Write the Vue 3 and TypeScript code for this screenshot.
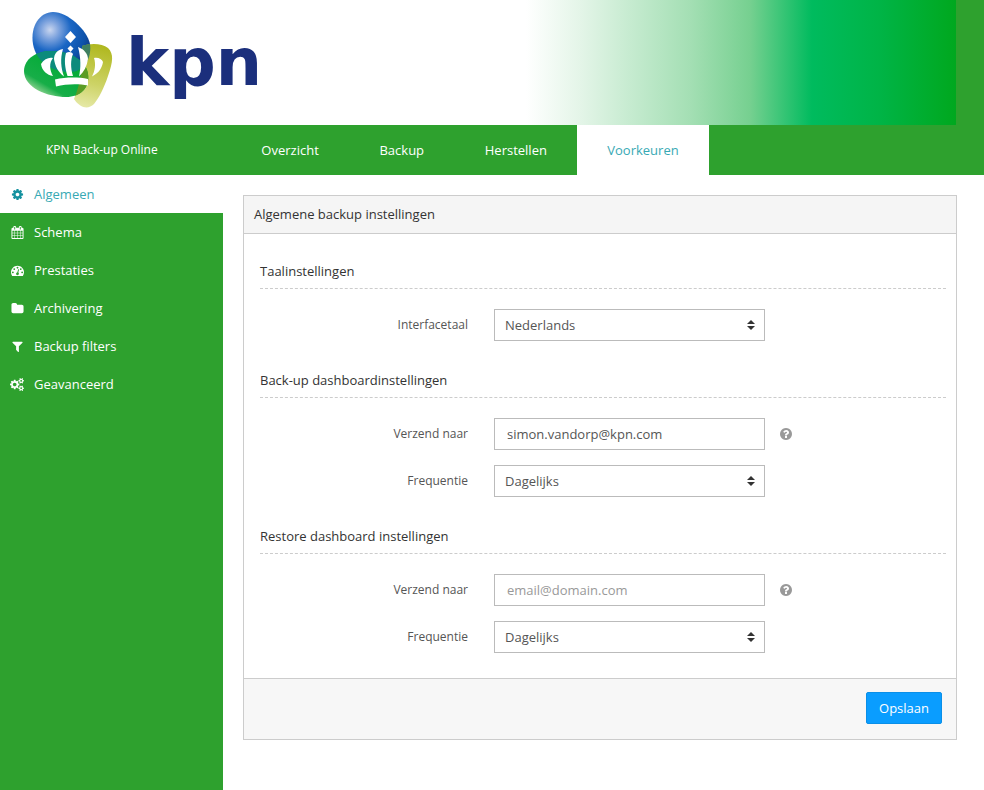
<template>
  <div class="app">
    <header class="top">
      <svg class="logo" viewBox="0 0 270 125" width="270" height="125" role="img" aria-label="kpn">
        <defs>
          <radialGradient id="blueEgg" gradientUnits="userSpaceOnUse" cx="50" cy="30" r="44">
            <stop offset="0" stop-color="#c9d6ef" />
            <stop offset="0.2" stop-color="#7fa4de" />
            <stop offset="0.48" stop-color="#1a66c4" />
            <stop offset="0.8" stop-color="#0d52ab" />
            <stop offset="1" stop-color="#103a86" />
          </radialGradient>
          <linearGradient id="greenBlob" gradientUnits="userSpaceOnUse" x1="58" y1="62" x2="38" y2="96">
            <stop offset="0" stop-color="#04ab38" />
            <stop offset="0.65" stop-color="#17ae48" />
            <stop offset="1" stop-color="#b5dea9" />
          </linearGradient>
          <linearGradient id="yellowBlob" gradientUnits="userSpaceOnUse" x1="100" y1="46" x2="84" y2="108">
            <stop offset="0" stop-color="#b0b820" />
            <stop offset="0.6" stop-color="#cdd366" />
            <stop offset="1" stop-color="#e6e9a8" />
          </linearGradient>
          <clipPath id="inGreen">
            <path :d="greenShape" />
          </clipPath>
          <clipPath id="inBlue">
            <path :d="blueShape" />
          </clipPath>
        </defs>

        <path :d="blueShape" fill="url(#blueEgg)" />
        <path :d="yellowShape" fill="url(#yellowBlob)" />
        <path :d="yellowShape" fill="#3f7f60" clip-path="url(#inBlue)" />
        <path :d="greenShape" fill="url(#greenBlob)" />
        <path :d="blueShape" fill="#0c8b7c" clip-path="url(#inGreen)" />
        <path :d="yellowShape" fill="#5b9c24" clip-path="url(#inGreen)" />

        <g fill="#fff">
          <path d="M70.500 31L76 37L70.500 43L65 37Z" />
          <path d="M70.500 45.500L73.500 48.500L70.500 52L67.500 48.500Z" />
          <path d="M55 79.500C66 77 78 77 88 79L88 85.500C78 83.500 66 84 56 86.500Z" />
          <path d="M41 64C44 59 49 57 53 58C49 63 49.500 70 53 76C47 75 42 71 41 64Z" />
          <path d="M63 49C57 50 54 54 54 59C55 66 58 72 64 76.500C61 68 60 59 63 49Z" />
          <path d="M66 53C69 51 72 52 73 54C70.500 60 70.500 68 73 76L67.500 76C65 68 64 60 66 53Z" />
          <path d="M78 47C84 49 88 54 88 59C87 66 84 72 79 76.500C81 68 81 58 78 47Z" />
          <path d="M94 58C98 57 102 59 103 62C102 68 99 73 92 76.500C95 71 96 64 94 58Z" />
        </g>
        <text class="wordmark" x="126" y="85">kpn</text>
      </svg>
    </header>

    <nav class="nav">
      <span class="brand">KPN Back-up Online</span>
      <a
        v-for="tab in tabs"
        :key="tab"
        class="tab"
        :class="{ active: tab === activeTab }"
      >{{ tab }}</a>
    </nav>

    <div class="main">
      <aside class="side">
        <a
          v-for="item in menu"
          :key="item.label"
          class="side-item"
          :class="{ active: item.label === 'Algemeen' }"
        >
          <span class="side-icon">
            <svg :viewBox="item.box" :width="item.width" height="13" fill="currentColor" aria-hidden="true">
              <path :d="item.path" />
            </svg>
          </span>
          {{ item.label }}
        </a>
      </aside>

      <section class="content">
        <div class="panel">
          <div class="panel-head">Algemene backup instellingen</div>

          <div class="panel-body">
            <div class="group">
              <h3 class="group-title">Taalinstellingen</h3>
              <div class="row">
                <label class="row-label">Interfacetaal</label>
                <div class="select-wrap">
                  <select class="ctrl select">
                    <option>Nederlands</option>
                  </select>
                  <span class="carets"></span>
                </div>
              </div>
            </div>

            <div class="group">
              <h3 class="group-title">Back-up dashboardinstellingen</h3>
              <div class="row">
                <label class="row-label">Verzend naar</label>
                <input class="ctrl input" type="text" value="simon.vandorp@kpn.com" />
                <svg class="help" viewBox="0 0 1792 1792" width="14" height="14" fill="currentColor" aria-hidden="true">
                  <path :d="helpPath" />
                </svg>
              </div>
              <div class="row">
                <label class="row-label">Frequentie</label>
                <div class="select-wrap">
                  <select class="ctrl select">
                    <option>Dagelijks</option>
                  </select>
                  <span class="carets"></span>
                </div>
              </div>
            </div>

            <div class="group">
              <h3 class="group-title">Restore dashboard instellingen</h3>
              <div class="row">
                <label class="row-label">Verzend naar</label>
                <input class="ctrl input" type="text" placeholder="email@domain.com" />
                <svg class="help" viewBox="0 0 1792 1792" width="14" height="14" fill="currentColor" aria-hidden="true">
                  <path :d="helpPath" />
                </svg>
              </div>
              <div class="row">
                <label class="row-label">Frequentie</label>
                <div class="select-wrap">
                  <select class="ctrl select">
                    <option>Dagelijks</option>
                  </select>
                  <span class="carets"></span>
                </div>
              </div>
            </div>
          </div>

          <div class="panel-foot">
            <button class="save" type="button">Opslaan</button>
          </div>
        </div>
      </section>
    </div>
  </div>
</template>

<script setup lang="ts">
const tabs = ['Overzicht', 'Backup', 'Herstellen', 'Voorkeuren']
const activeTab = 'Voorkeuren'

// logo blobs, shared with the clip paths for the overlaps
const blueShape = 'M33 44C30 26 40 12 53 12C68 12 87 30 90 44C92 58 84 72 70 72C52 72 36 62 33 44Z'
const greenShape = 'M24 71C24 58 38 50 54 51C70 52 86 60 88 74C90 88 80 97 66 97C48 97 24 88 24 71Z'
const yellowShape = 'M82 46C90 43 102 43 108 48C114 54 113 62 108 76C104 88 99 98 94 104C88 110 80 108 74 99C78 90 84 70 82 46Z'

// font-awesome 4 glyphs
const helpPath =
  'M1024 1376v-192q0-14-9-23t-23-9h-192q-14 0-23 9t-9 23v192q0 14 9 23t23 9h192q14 0 23-9t9-23zm256-672q0-88-55.500-163t-138.500-116-170-41q-243 0-371 213-15 24 8 42l132 100q7 6 19 6 16 0 25-12 53-68 86-92 34-24 86-24 48 0 85.500 26t37.500 59q0 38-20 61t-68 45q-63 28-115.500 86.500t-52.500 125.500v36q0 14 9 23t23 9h192q14 0 23-9t9-23q0-19 21.500-49.500t54.500-49.500q32-18 49-28.500t46-35 44.500-48 28-60.500 12.500-81zm384 192q0 209-103 385.500t-279.500 279.500-385.500 103-385.500-103-279.500-279.500-103-385.500 103-385.500 279.500-279.500 385.500-103 385.500 103 279.500 279.500 103 385.500z'

const menu = [
  {
    label: 'Algemeen',
    box: '0 0 1792 1792',
    width: 13,
    path: 'M1152 896q0-106-75-181t-181-75-181 75-75 181 75 181 181 75 181-75 75-181zm512-109v222q0 12-8 23t-20 13l-185 28q-19 54-39 91 35 50 107 138 10 12 10 25t-9 23q-27 37-99 108t-94 71q-12 0-26-9l-138-108q-44 23-91 38-16 136-29 186-7 28-36 28h-222q-14 0-24.500-8.500t-11.500-21.500l-28-184q-49-16-90-37l-141 107q-10 9-25 9-14 0-25-11-126-114-165-168-7-10-7-23 0-12 8-23 15-21 51-66.500t54-70.500q-27-50-41-99l-183-27q-13-2-21-12.500t-8-23.500v-222q0-12 8-23t19-13l186-28q14-46 39-92-40-57-107-138-10-12-10-24 0-10 9-23 26-36 98.500-107.500t94.500-71.500q13 0 26 10l138 107q44-23 91-38 16-136 29-186 7-28 36-28h222q14 0 24.500 8.500t11.500 21.500l28 184q49 16 90 37l142-107q9-9 24-9 13 0 25 10 129 119 165 170 7 8 7 22 0 12-8 23-15 21-51 66.500t-54 70.500q26 50 41 98l183 28q13 2 21 12.500t8 23.500z',
  },
  {
    label: 'Schema',
    box: '0 0 1792 1792',
    width: 13,
    path: 'M192 1664h288v-288h-288v288zm352 0h320v-288h-320v288zm-352-352h288v-320h-288v320zm352 0h320v-320h-320v320zm-352-384h288v-288h-288v288zm736 736h320v-288h-320v288zm-384-736h320v-288h-320v288zm768 736h288v-288h-288v288zm-384-352h320v-320h-320v320zm-352-864v-288q0-13-9.500-22.500t-22.500-9.500h-64q-13 0-22.500 9.500t-9.500 22.500v288q0 13 9.500 22.500t22.500 9.500h64q13 0 22.500-9.500t9.500-22.500zm736 864h288v-320h-288v320zm-384-384h320v-288h-320v288zm384 0h288v-288h-288v288zm32-480v-288q0-13-9.500-22.500t-22.500-9.500h-64q-13 0-22.500 9.500t-9.500 22.500v288q0 13 9.500 22.500t22.500 9.500h64q13 0 22.500-9.500t9.500-22.500zm384-64v1280q0 52-38 90t-90 38h-1408q-52 0-90-38t-38-90v-1280q0-52 38-90t90-38h128v-96q0-66 47-113t113-47h64q66 0 113 47t47 113v96h384v-96q0-66 47-113t113-47h64q66 0 113 47t47 113v96h128q52 0 90 38t38 90z',
  },
  {
    label: 'Prestaties',
    box: '0 0 1792 1792',
    width: 13,
    path: 'M384 1152q0-53-37.500-90.500t-90.500-37.500-90.500 37.500-37.500 90.500 37.500 90.500 90.500 37.500 90.500-37.500 37.500-90.500zm192-448q0-53-37.500-90.500t-90.500-37.500-90.500 37.500-37.500 90.500 37.500 90.500 90.500 37.500 90.500-37.500 37.500-90.500zm428 481l101-382q6-26-7.500-48.500t-38.500-29.500-48 6.500-30 39.500l-101 382q-60 5-107 43.500t-63 98.500q-20 77 20 146t117 89 146-20 89-117q16-60-6-117t-72-91zm660-33q0-53-37.500-90.500t-90.500-37.500-90.500 37.500-37.500 90.500 37.500 90.500 90.500 37.500 90.500-37.500 37.500-90.500zm-640-640q0-53-37.500-90.500t-90.500-37.500-90.500 37.500-37.500 90.500 37.500 90.500 90.500 37.500 90.500-37.500 37.500-90.500zm448 192q0-53-37.500-90.500t-90.500-37.500-90.500 37.500-37.500 90.500 37.500 90.500 90.500 37.500 90.500-37.500 37.500-90.500zm320 448q0 261-141 483-19 29-54 29h-1402q-35 0-54-29-141-221-141-483 0-182 71-348t191-286 286-191 348-71 348 71 286 191 191 286 71 348z',
  },
  {
    label: 'Archivering',
    box: '0 0 1792 1792',
    width: 13,
    path: 'M1728 608v704q0 92-66 158t-158 66h-1216q-92 0-158-66t-66-158v-960q0-92 66-158t158-66h320q92 0 158 66t66 158v32h672q92 0 158 66t66 158z',
  },
  {
    label: 'Backup filters',
    box: '0 0 1792 1792',
    width: 13,
    path: 'M1595 295q17 41-14 70l-493 493v742q0 42-39 59-13 5-25 5-27 0-45-19l-256-256q-19-19-19-45v-486l-493-493q-31-29-14-70 17-39 59-39h1280q42 0 59 39z',
  },
  {
    label: 'Geavanceerd',
    box: '0 0 1920 1792',
    width: 14,
    path: 'M896 896q0-106-75-181t-181-75-181 75-75 181 75 181 181 75 181-75 75-181zm768 512q0-52-38-90t-90-38-90 38-38 90q0 53 37.500 90.500t90.500 37.500 90.500-37.500 37.500-90.500zm0-1024q0-52-38-90t-90-38-90 38-38 90q0 53 37.500 90.500t90.500 37.500 90.500-37.500 37.500-90.500zm-384 421v185q0 10-7 19.500t-16 10.500l-155 24q-11 35-32 76 34 48 90 115 7 11 7 20 0 12-7 19-23 30-82.500 89.500t-78.500 59.500q-11 0-21-7l-115-90q-37 19-77 31-11 108-23 155-7 24-30 24h-186q-11 0-20-7.500t-10-17.500l-23-153q-34-10-75-31l-118 89q-7 7-20 7-11 0-21-8-144-133-144-160 0-9 7-19 10-14 41-53t47-61q-23-44-35-82l-152-24q-10-1-17-9.500t-7-19.500v-185q0-10 7-19.500t16-10.500l155-24q11-35 32-76-34-48-90-115-7-11-7-20 0-12 7-20 22-30 82-89t79-59q11 0 21 7l115 90q34-18 77-32 11-108 23-154 7-24 30-24h186q11 0 20 7.500t10 17.500l23 153q34 10 75 31l118-89q8-7 20-7 11 0 21 8 144 133 144 160 0 8-7 19-12 16-42 54t-45 60q23 48 34 82l152 23q10 2 17 10.500t7 19.500zm640 533v140q0 16-149 31-12 27-30 52 51 113 51 138 0 4-4 7-122 71-124 71-8 0-46-47t-52-68q-20 2-30 2t-30-2q-14 21-52 68t-46 47q-2 0-124-71-4-3-4-7 0-25 51-138-18-25-30-52-149-15-149-31v-140q0-16 149-31 13-29 30-52-51-113-51-138 0-4 4-7 4-2 35-20t59-34 30-16q8 0 46 46.500t52 67.500q20-2 30-2t30 2q51-71 92-112l6-2q4 0 124 70 4 3 4 7 0 25-51 138 17 23 30 52 149 15 149 31zm0-1024v140q0 16-149 31-12 27-30 52 51 113 51 138 0 4-4 7-122 71-124 71-8 0-46-47t-52-68q-20 2-30 2t-30-2q-14 21-52 68t-46 47q-2 0-124-71-4-3-4-7 0-25 51-138-18-25-30-52-149-15-149-31v-140q0-16 149-31 13-29 30-52-51-113-51-138 0-4 4-7 4-2 35-20t59-34 30-16q8 0 46 46.500t52 67.500q20-2 30-2t30 2q51-71 92-112l6-2q4 0 124 70 4 3 4 7 0 25-51 138 17 23 30 52 149 15 149 31z',
  },
]
</script>

<style>
html,
body {
  margin: 0;
  background: #fff;
}
</style>

<style scoped>
.app {
  display: flex;
  flex-direction: column;
  height: 100vh;
  overflow: hidden;
  font-family: "Open Sans", "Liberation Sans", sans-serif;
  font-size: 13px;
  color: #333;
}

/* header strip: white, fade to green, square green edge */
.top {
  flex: none;
  height: 125px;
  background: linear-gradient(
    90deg,
    #fff 0,
    #fff 526px,
    #e4f5e8 580px,
    #c6ebd0 630px,
    #a4dfb4 690px,
    #76d090 750px,
    #00bb5e 812px,
    #00b446 880px,
    #00a81e 956px,
    #2ea12e 956px
  );
}

.logo {
  display: block;
}
.wordmark {
  font-family: "DejaVu Sans", sans-serif;
  font-size: 65px;
  font-weight: 700;
  fill: #1b2f7c;
}

.nav {
  flex: none;
  display: flex;
  height: 50px;
  background: #2ea12e;
  color: #fff;
  line-height: 50px;
}
.brand {
  flex: none;
  width: 185px;
  padding-left: 46px;
  font-size: 12px;
  font-weight: 500;
}
.tab {
  padding: 0 30.35px;
}
.tab.active {
  padding: 0 30px;
  background: #fff;
  color: #38a9b4;
}

.main {
  flex: 1;
  display: flex;
  min-height: 0;
}
.side {
  flex: none;
  width: 223px;
  background: #2ea12e;
}
.side-item {
  display: flex;
  align-items: center;
  height: 38px;
  color: #fff;
}
.side-item.active {
  background: #fff;
  color: #38a9b4;
}
.side-icon {
  flex: none;
  display: flex;
  justify-content: center;
  width: 14px;
  margin: 0 10px;
}
.side-item.active .side-icon {
  color: #14919f;
}

.content {
  flex: 1;
  padding: 20px 27px 0 20px;
}
.panel {
  border: 1px solid #ccc;
}
.panel-head {
  height: 37px;
  padding-left: 10px;
  line-height: 37px;
  background: #f5f5f5;
  border-bottom: 1px solid #ccc;
}
.panel-body {
  padding: 28px 10px 25px 16px;
}

.group + .group {
  margin-top: 30px;
}
.group-title {
  margin: 0 0 20px;
  padding-bottom: 8px;
  border-bottom: 1px dashed #ccc;
  font-size: 13px;
  font-weight: 400;
  line-height: 18px;
}

.row {
  display: flex;
  align-items: center;
  height: 32px;
}
.row + .row {
  margin-top: 15px;
}
.row-label {
  flex: none;
  width: 208px;
  margin-right: 26px;
  padding-bottom: 1px;
  text-align: right;
  font-size: 12px;
  color: #555;
}

.ctrl {
  display: block;
  box-sizing: border-box;
  width: 271px;
  height: 32px;
  margin: 0;
  border: 1px solid #bbb;
  border-radius: 0;
  background: #fff;
  font: 13px "Open Sans", "Liberation Sans", sans-serif;
  color: #555;
  outline: none;
}
.input {
  padding: 0 12px;
}
.input::placeholder {
  color: #999;
  opacity: 1;
}
.select {
  padding: 0 30px 0 10px;
  appearance: none;
}
.select-wrap {
  position: relative;
}
.carets {
  position: absolute;
  right: 10px;
  top: 11px;
  width: 0;
  height: 0;
  border-left: 4px solid transparent;
  border-right: 4px solid transparent;
  border-bottom: 4px solid #333;
  pointer-events: none;
}
.carets::after {
  content: "";
  position: absolute;
  left: -4px;
  top: 6px;
  border-left: 4px solid transparent;
  border-right: 4px solid transparent;
  border-top: 4px solid #333;
}

.help {
  flex: none;
  margin-left: 14px;
  color: #999;
}

.panel-foot {
  display: flex;
  justify-content: flex-end;
  padding: 13px 14px 15px;
  background: #f7f7f7;
  border-top: 1px solid #ccc;
}
.save {
  width: 76px;
  height: 32px;
  padding: 0;
  border: 1px solid #0a8fe8;
  border-radius: 2px;
  background: #0a9dff;
  color: #fff;
  font: 13px "Open Sans", "Liberation Sans", sans-serif;
}
</style>
